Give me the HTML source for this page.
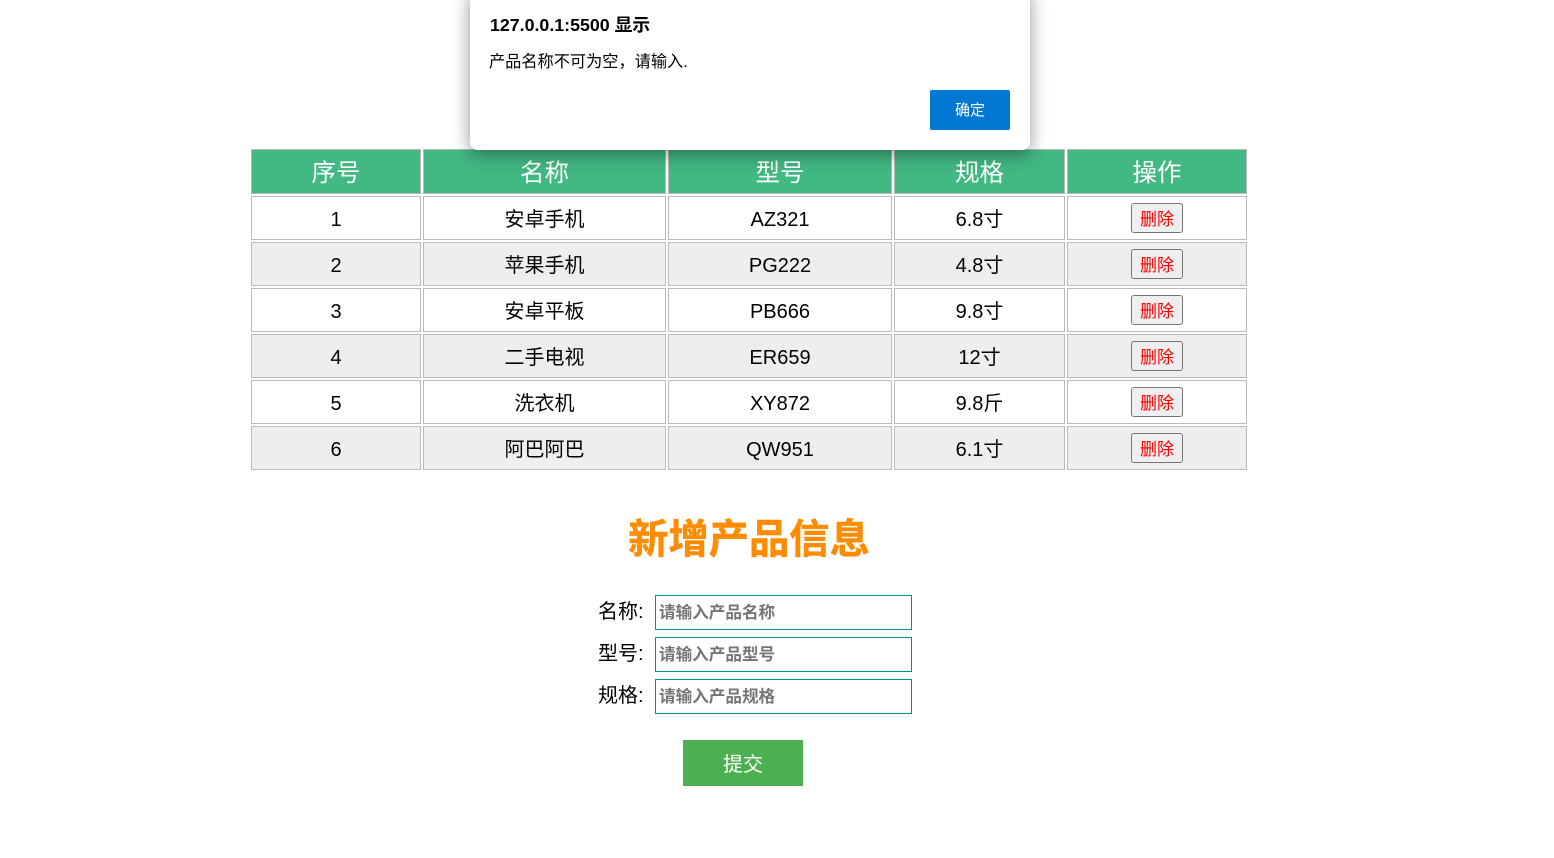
<!DOCTYPE html>
<html lang="zh-CN">
<head>
<meta charset="utf-8">
<title>产品信息</title>
<style>
html,body{margin:0;padding:0;background:#fff;width:1554px;height:858px;overflow:hidden}
body{position:relative;font-family:"Liberation Sans","Noto Sans CJK SC",sans-serif;color:#000}
table{position:absolute;left:249px;top:147px;border-collapse:separate;border-spacing:2px;table-layout:fixed;width:1000px}
th,td{border:1px solid #bbb;padding:0;text-align:center;box-sizing:border-box;font-weight:normal}
th{height:45px;background:#42b883;color:#fff;font-size:24.5px;padding-top:4px;line-height:39px}
td{height:44px;font-size:20px;padding-top:4px;line-height:38px}
tr.e td{background:#eee}
td button{display:inline-block;vertical-align:middle;width:52px;height:30px;box-sizing:border-box;margin:-6px 0 0;padding:4px 0 0;border:1px solid #767676;border-radius:3px;background:#efefef;color:#f00;font:17px/24px "Liberation Sans","Noto Sans CJK SC",sans-serif}
h2{position:absolute;left:529px;top:513px;width:440px;margin:0;text-align:center;font-size:40.3px;line-height:54px;font-weight:bold;color:#ff8c00;-webkit-text-stroke:.5px #ff8c00}
label{position:absolute;left:598px;width:50px;font-size:20px;line-height:28px;white-space:nowrap}
.i{position:absolute;left:655px;width:257px;height:35px;box-sizing:border-box;border:1px solid #009090;background:#fff;color:#757575;font-size:16.6px;font-weight:bold;line-height:34px;padding-left:3px;white-space:nowrap}
.s{position:absolute;left:683px;top:740px;width:120px;height:46px;background:#4caf50;color:#fff;text-align:center;font-size:20px;line-height:50px}
.d{position:absolute;left:470px;top:-10px;width:560px;height:160px;background:#fff;border-radius:8px;box-shadow:0 4px 18px rgba(0,0,0,.42);z-index:5}
.d .t{position:absolute;left:20px;top:23px;font-size:17.8px;line-height:24px;font-weight:bold;white-space:nowrap}
.d .m{position:absolute;left:19px;top:60px;font-size:16.2px;line-height:24px;white-space:nowrap}
.d .b{position:absolute;left:460px;top:100px;width:80px;height:40px;background:#0078d4;border-radius:2px;color:#fff;text-align:center;font-size:15px;line-height:41px}
</style>
</head>
<body>
<table>
<colgroup><col style="width:170px"><col style="width:243px"><col style="width:224px"><col style="width:171px"><col style="width:180px"></colgroup>
<tr><th>序号</th><th>名称</th><th>型号</th><th>规格</th><th>操作</th></tr>
<tr><td>1</td><td>安卓手机</td><td>AZ321</td><td>6.8寸</td><td><button>删除</button></td></tr>
<tr class="e"><td>2</td><td>苹果手机</td><td>PG222</td><td>4.8寸</td><td><button>删除</button></td></tr>
<tr><td>3</td><td>安卓平板</td><td>PB666</td><td>9.8寸</td><td><button>删除</button></td></tr>
<tr class="e"><td>4</td><td>二手电视</td><td>ER659</td><td>12寸</td><td><button>删除</button></td></tr>
<tr><td>5</td><td>洗衣机</td><td>XY872</td><td>9.8斤</td><td><button>删除</button></td></tr>
<tr class="e"><td>6</td><td>阿巴阿巴</td><td>QW951</td><td>6.1寸</td><td><button>删除</button></td></tr>
</table>
<h2>新增产品信息</h2>
<label style="top:598px">名称:</label><div class="i" style="top:595px">请输入产品名称</div>
<label style="top:640px">型号:</label><div class="i" style="top:637px">请输入产品型号</div>
<label style="top:682px">规格:</label><div class="i" style="top:679px">请输入产品规格</div>
<div class="s">提交</div>
<div class="d">
<div class="t">127.0.0.1:5500 显示</div>
<div class="m">产品名称不可为空，请输入.</div>
<div class="b">确定</div>
</div>
</body>
</html>
